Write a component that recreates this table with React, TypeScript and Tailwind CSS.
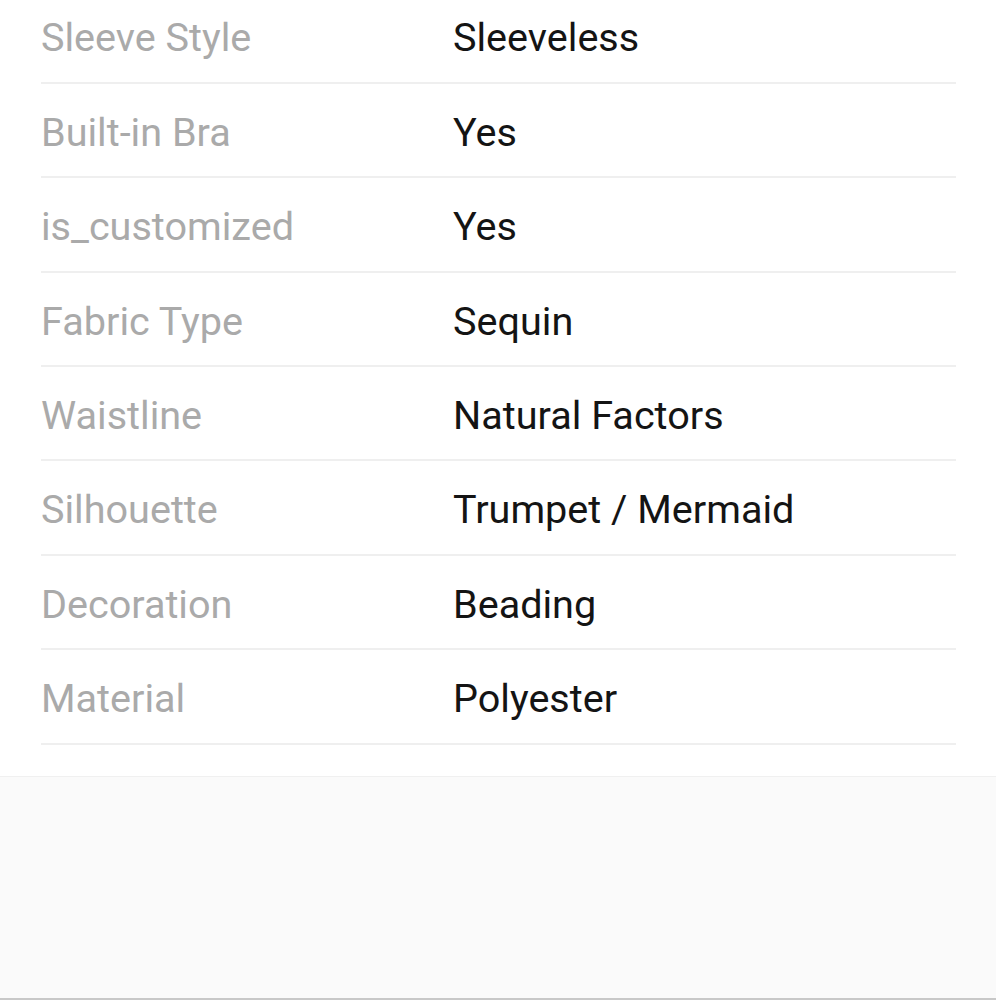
import React from "react";

const rows: [string, string][] = [
  ["Sleeve Style", "Sleeveless"],
  ["Built-in Bra", "Yes"],
  ["is_customized", "Yes"],
  ["Fabric Type", "Sequin"],
  ["Waistline", "Natural Factors"],
  ["Silhouette", "Trumpet / Mermaid"],
  ["Decoration", "Beading"],
  ["Material", "Polyester"],
];

export default function App() {
  return (
    <div className="w-[996px] h-[1000px] bg-white flex flex-col overflow-hidden" style={{ fontFamily: "Roboto, 'Noto Sans', sans-serif" }}>
      <div className="h-[776px] overflow-hidden">
        <div className="mt-[-10.5px] pl-[41px] pr-[40px]">
          {rows.map(([k, v]) => (
            <div key={k} className="h-[94.4px] border-b-2 border-[#efefef] flex items-center pt-[5px] text-[39.6px] leading-none">
              <div className="w-[412px] text-[#aaaaaa]">{k}</div>
              <div className="text-[#141414]">{v}</div>
            </div>
          ))}
        </div>
      </div>
      <div className="flex-1 bg-[#fafafa] border-t border-[#f0f0f0] border-b-2 border-b-[#c8c8c8]" />
    </div>
  );
}
